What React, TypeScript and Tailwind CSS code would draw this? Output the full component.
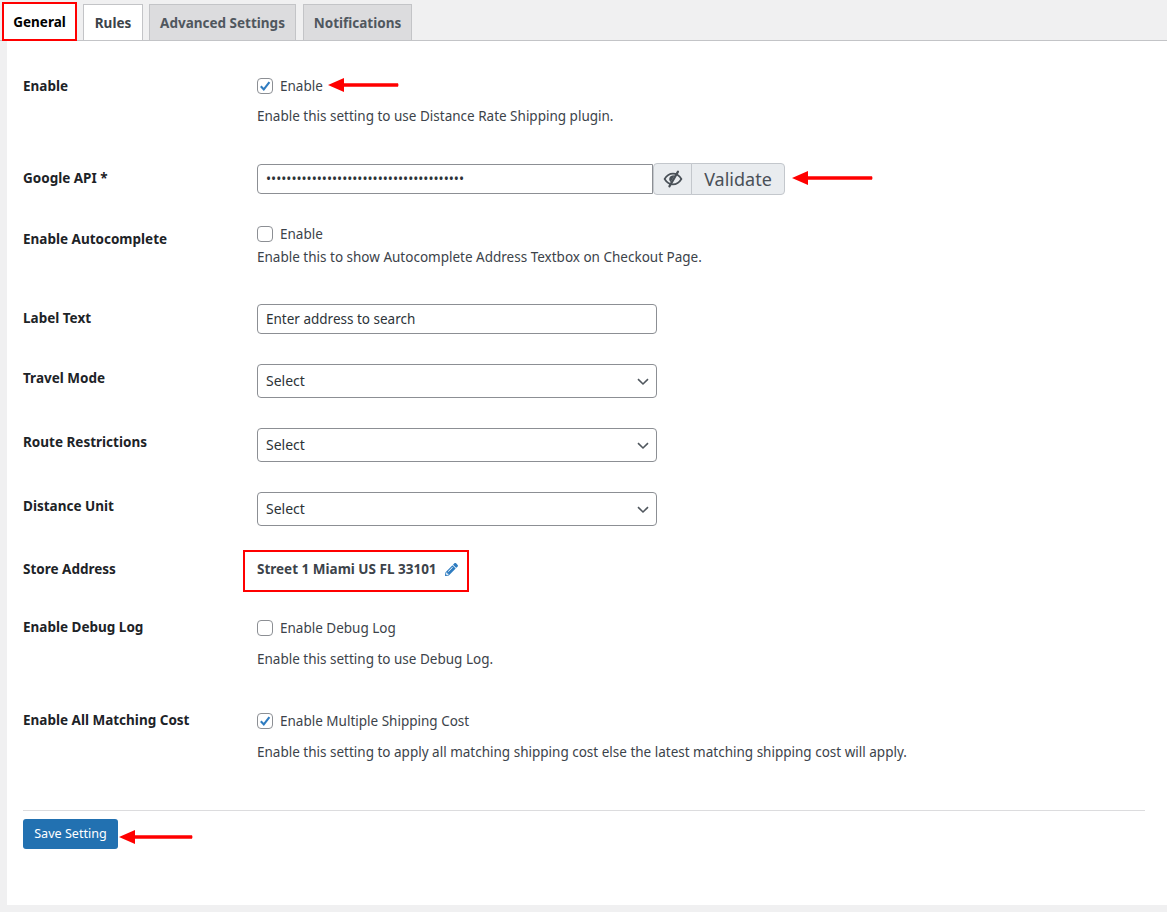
import { ReactNode } from "react"
import { FaPencilAlt } from "react-icons/fa"

// red annotation arrow pointing left, sits over the page
function Arrow({ width, className }: { width: number; className: string }) {
  return (
    <svg className={`absolute ${className}`} width={width} height="16" viewBox={`0 0 ${width} 16`}>
      <path d={`M0 8 L16 1 L16 6.2 L${width - 1} 6.2 Q${width} 8 ${width - 1} 9.8 L16 9.8 L16 15 Z`} fill="#ff0000" />
    </svg>
  )
}

function EyeHidden() {
  return (
    <svg width="20" height="20" viewBox="0 0 20 20">
      <path d="M1.6 10 C4 6 7 4.6 10 4.6 C13 4.6 16 6 18.4 10 C16 14 13 15.4 10 15.4 C7 15.4 4 14 1.6 10Z" fill="none" stroke="#495057" strokeWidth="1.7" />
      <path d="M6.2 10 C6.2 7.8 8 6.2 11.6 6.2 L7.8 13 C6.8 12.4 6.2 11.2 6.2 10Z" fill="#495057" />
      <path d="M15 2.6 L6.4 17.4" fill="none" stroke="#495057" strokeWidth="2.2" strokeLinecap="round" />
    </svg>
  )
}

function Check({ checked, label }: { checked?: boolean; label: string }) {
  return (
    <label className="flex h-[21px] items-center gap-[7px]">
      <span className="flex h-4 w-4 items-center justify-center rounded-[4px] border border-[#8c8f94] bg-white">
        {checked && (
          <svg width="12" height="12" viewBox="0 0 12 12">
            <path d="M1.8 6.2 L4.8 9.4 L10.4 2.2" fill="none" stroke="#2f7cc0" strokeWidth="2.1" />
          </svg>
        )}
      </span>
      <span>{label}</span>
    </label>
  )
}

function Row({ label, labelClass, className, children }: { label: string; labelClass: string; className: string; children: ReactNode }) {
  return (
    <div className={`flex items-start ${className}`}>
      <div className={`w-[234px] shrink-0 font-bold leading-5 text-[#1d2327] ${labelClass}`}>{label}</div>
      <div className="relative flex-1">{children}</div>
    </div>
  )
}

function SelectBox() {
  return (
    <div className="relative w-[400px]">
      <select className="h-[34px] w-full appearance-none rounded-[4px] border border-[#8c8f94] bg-white pl-2 text-[14px] text-[#2c3338]">
        <option>Select</option>
      </select>
      <svg className="absolute right-[8px] top-[14px]" width="12" height="8" viewBox="0 0 12 8">
        <path d="M1 1.2 L6 6 L11 1.2" fill="none" stroke="#50575e" strokeWidth="1.6" />
      </svg>
    </div>
  )
}

export default function App() {
  return (
    <div className="relative h-[912px] overflow-hidden bg-[#f0f0f1] font-['Noto_Sans',sans-serif] text-[13.5px] leading-5 text-[#3c434a]">
      {/* tabs */}
      <div className="flex h-[41px] items-end border-b border-[#c3c4c7] pl-[2px]">
        <div className="relative -mb-px flex h-[39px] w-[75px] items-center justify-center border-2 border-[#ff0000] bg-white font-bold text-[#000]">General</div>
        <div className="ml-[6px] flex h-[36px] w-[60px] items-center justify-center border border-b-0 border-[#c3c4c7] bg-white font-bold">Rules</div>
        <div className="ml-[6px] flex h-[36px] w-[147px] items-center justify-center border border-b-0 border-[#c3c4c7] bg-[#dcdcde] font-bold text-[#50575e]">Advanced Settings</div>
        <div className="ml-[7px] flex h-[36px] w-[109px] items-center justify-center border border-b-0 border-[#c3c4c7] bg-[#dcdcde] font-bold text-[#50575e]">Notifications</div>
      </div>

      <div className="ml-[7px] h-[864px] bg-white pl-4 pt-[34px]">
        <Row label="Enable" labelClass="pt-px" className="">
          <Check checked label="Enable" />
          <Arrow width={71} className="left-[71px] top-[2px]" />
          <p className="mt-[10px]">Enable this setting to use Distance Rate Shipping plugin.</p>
        </Row>

        <Row label="Google API *" labelClass="pt-[5px]" className="mt-[37px]">
          <div className="flex h-8 items-center">
            <input
              type="password"
              readOnly
              value="......................................."
              className="h-[30px] w-[396px] rounded-l-[4px] border border-[#8c8f94] bg-white pl-2 text-[#2c3338]"
            />
            <div className="flex h-8 w-[39px] items-center justify-center rounded-l-[4px] border border-[#c3c7cc] bg-[#e9ecef]">
              <EyeHidden />
            </div>
            <div className="-ml-px flex h-8 w-[94px] items-center justify-center rounded-r-[4px] border border-[#c3c7cc] bg-[#e9ecef] text-[18px] text-[#495057]">
              Validate
            </div>
          </div>
          <Arrow width={81} className="left-[535px] top-[7px]" />
        </Row>

        <Row label="Enable Autocomplete" labelClass="pt-[6px]" className="mt-[28px]">
          <Check label="Enable" />
          <p className="mt-[3px]">Enable this to show Autocomplete Address Textbox on Checkout Page.</p>
        </Row>

        <Row label="Label Text" labelClass="pt-1" className="mt-[37px]">
          <input
            readOnly
            value="Enter address to search"
            className="h-[30px] w-[400px] rounded-[4px] border border-[#8c8f94] bg-white pl-2 text-[#2c3338]"
          />
        </Row>

        <Row label="Travel Mode" labelClass="pt-1" className="mt-[30px]">
          <SelectBox />
        </Row>
        <Row label="Route Restrictions" labelClass="pt-1" className="mt-[30px]">
          <SelectBox />
        </Row>
        <Row label="Distance Unit" labelClass="pt-1" className="mt-[30px]">
          <SelectBox />
        </Row>

        <Row label="Store Address" labelClass="pt-px" className="mt-[32px]">
          <div className="flex h-[22px] items-center gap-2 font-bold">
            <span>Street 1 Miami US FL 33101</span>
            <FaPencilAlt size={13} className="text-[#2f7cc0]" />
          </div>
          <div className="absolute -left-[14px] -top-[8px] h-[42px] w-[226px] border-2 border-[#ff0000]" />
        </Row>

        <Row label="Enable Debug Log" labelClass="" className="mt-[37px]">
          <Check label="Enable Debug Log" />
          <p className="mt-[11px]">Enable this setting to use Debug Log.</p>
        </Row>

        <Row label="Enable All Matching Cost" labelClass="" className="mt-[41px]">
          <Check checked label="Enable Multiple Shipping Cost" />
          <p className="mt-[11px]">Enable this setting to apply all matching shipping cost else the latest matching shipping cost will apply.</p>
        </Row>

        <div className="mr-[22px] mt-[48px] border-t border-[#dcdcde]" />

        <div className="relative mt-2">
          <button className="h-[30px] w-[95px] rounded-[3px] bg-[#2271b1] text-[12.6px] text-white">Save Setting</button>
          <Arrow width={74} className="left-[96px] top-[10px]" />
        </div>
      </div>
    </div>
  )
}
